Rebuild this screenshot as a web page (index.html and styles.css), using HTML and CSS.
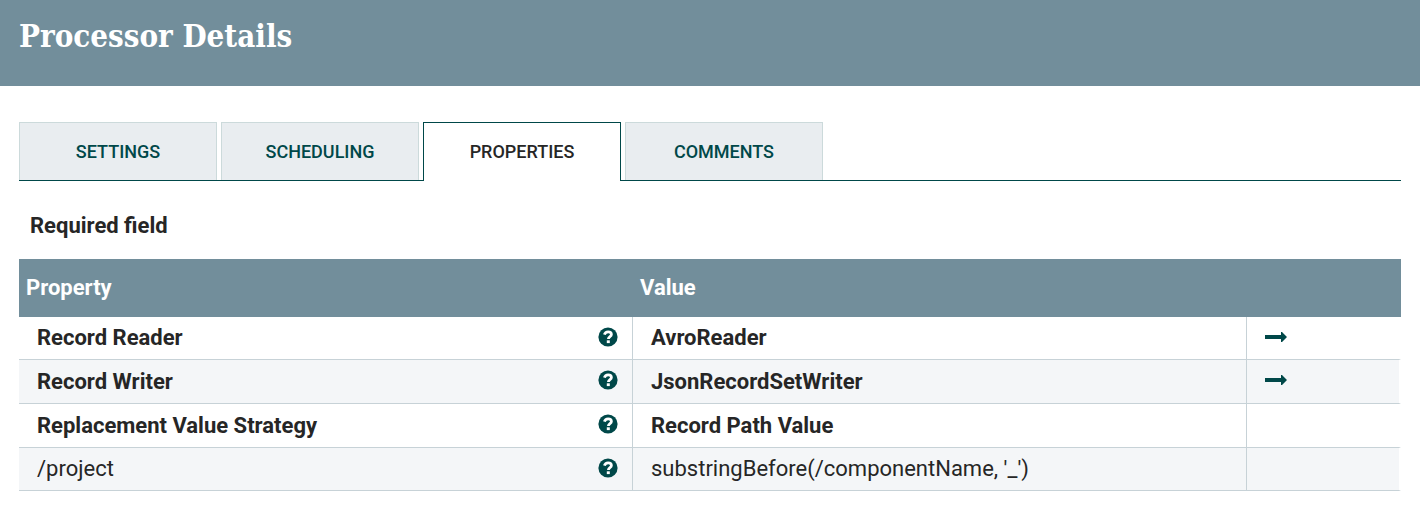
FILE: index.html
```html
<!DOCTYPE html>
<html lang="en">
<head>
<meta charset="utf-8">
<title>Processor Details</title>
<link rel="stylesheet" href="styles.css">
</head>
<body>
<svg class="sprite" aria-hidden="true">
  <symbol id="help" viewBox="0 0 20 20">
    <circle cx="10" cy="10" r="9.6" fill="currentColor"/>
    <path d="M6.4 7.6C7 5.6 8.3 4.8 10.1 4.8c2.1 0 3.3 1.1 3.3 2.7 0 2.3-3 2.2-3 4.6" fill="none" stroke="#fff" stroke-width="2.8"/>
    <rect x="8.8" y="13.3" width="3" height="2.8" fill="#fff"/>
  </symbol>
  <symbol id="arrow" viewBox="0 0 22 10">
    <path d="M0 3.1h16V0h1l5 5-5 5h-1V6.9H0z" fill="currentColor"/>
  </symbol>
</svg>
<header class="dialog-header">
  <h1 class="dialog-title">Processor Details</h1>
</header>
<main class="dialog-content">
  <div class="tabs" role="tablist">
    <button class="tab" role="tab" type="button">SETTINGS</button>
    <button class="tab" role="tab" type="button">SCHEDULING</button>
    <button class="tab tab-selected" role="tab" type="button" aria-selected="true">PROPERTIES</button>
    <button class="tab" role="tab" type="button">COMMENTS</button>
  </div>
  <p class="required-label">Required field</p>
  <table class="properties">
    <colgroup><col><col><col class="col-actions"></colgroup>
    <thead>
      <tr><th scope="col">Property</th><th scope="col">Value</th><th></th></tr>
    </thead>
    <tbody>
      <tr class="required">
        <td><div class="name"><span>Record Reader</span><button class="icon-button" type="button" aria-label="Help"><svg class="help-icon"><use href="#help"/></svg></button></div></td>
        <td>AvroReader</td>
        <td><button class="icon-button" type="button" aria-label="Go to"><svg class="arrow-icon"><use href="#arrow"/></svg></button></td>
      </tr>
      <tr class="required">
        <td><div class="name"><span>Record Writer</span><button class="icon-button" type="button" aria-label="Help"><svg class="help-icon"><use href="#help"/></svg></button></div></td>
        <td>JsonRecordSetWriter</td>
        <td><button class="icon-button" type="button" aria-label="Go to"><svg class="arrow-icon"><use href="#arrow"/></svg></button></td>
      </tr>
      <tr class="required">
        <td><div class="name"><span>Replacement Value Strategy</span><button class="icon-button" type="button" aria-label="Help"><svg class="help-icon"><use href="#help"/></svg></button></div></td>
        <td>Record Path Value</td>
        <td></td>
      </tr>
      <tr>
        <td><div class="name"><span>/project</span><button class="icon-button" type="button" aria-label="Help"><svg class="help-icon"><use href="#help"/></svg></button></div></td>
        <td>substringBefore(/componentName, '_')</td>
        <td></td>
      </tr>
    </tbody>
  </table>
</main>
</body>
</html>
```
FILE: styles.css
```css
* { box-sizing: border-box; }
body {
  margin: 0;
  background: #fff;
  color: #262626;
  font-family: Roboto, "Liberation Sans", sans-serif;
  font-size: 22px;
  line-height: 28px;
}
.sprite { display: none; }
.dialog-header {
  padding: 16px 19px 30px;
  background: #728e9b;
}
.dialog-title {
  margin: 0;
  color: #fff;
  font-family: "Roboto Slab", "DejaVu Serif Condensed", "DejaVu Serif", serif;
  font-size: 31px;
  font-weight: 700;
  line-height: 40px;
}
.dialog-content { padding: 36px 19px 20px; }
.tabs {
  display: flex;
  gap: 4px;
  border-bottom: 1px solid #004849;
}
.tab {
  width: 198px;
  height: 58px;
  padding: 0;
  border: 1px solid #ccdadb;
  border-bottom: 0;
  background: #e9edf0;
  color: #004849;
  font-family: inherit;
  font-size: 18px;
  font-weight: 500;
  line-height: 24px;
}
.tab-selected {
  height: 59px;
  margin-bottom: -1px;
  border-color: #004849;
  background: #fff;
  color: #262626;
}
.required-label {
  margin: 31px 0 19px;
  padding-left: 11px;
  font-weight: 700;
}
.properties {
  width: 100%;
  table-layout: fixed;
  border-collapse: separate;
  border-spacing: 0;
}
.col-actions { width: 154px; }
.properties th {
  height: 58px;
  padding: 0 7px;
  background: #728e9b;
  color: #fff;
  text-align: left;
}
.properties td {
  height: 44px;
  padding: 0 14px 0 18px;
  border-right: 1px solid #c7d2d7;
  border-bottom: 1px solid #c7d2d7;
}
.properties tr:first-child td,
.properties tr:last-child td { height: 43px; }
.properties td:last-child { border-right: 2px solid #fff; }
.properties tbody tr:nth-child(even) { background: #f4f6f8; }
.required { font-weight: 700; }
.name {
  display: flex;
  align-items: center;
  justify-content: space-between;
}
.icon-button {
  display: flex;
  padding: 0 0 3px;
  border: 0;
  background: none;
  color: #004849;
}
.help-icon { width: 20px; height: 20px; }
.arrow-icon { width: 22px; height: 10px; }
```
